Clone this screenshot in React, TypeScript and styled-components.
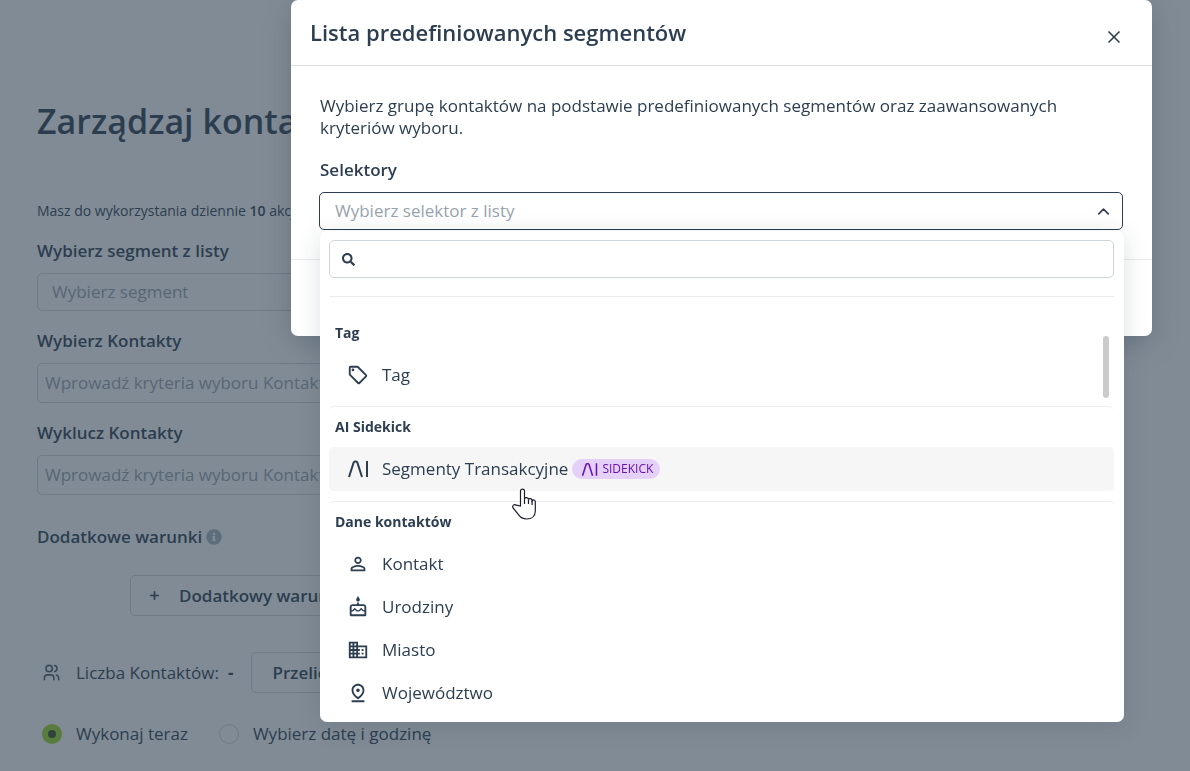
import React from 'react';
import styled, { createGlobalStyle, css } from 'styled-components';
import { MdOutlineSell, MdPersonOutline, MdOutlineCake, MdOutlinePinDrop, MdDomain } from 'react-icons/md';
import { FaSearch, FaInfoCircle } from 'react-icons/fa';
import { TbUsers } from 'react-icons/tb';
import { X, ChevronUp, Plus } from 'lucide-react';

const ink = '#2c3e50';
const muted = '#98a3ae';
const line = '#cfd6da';

const GlobalStyle = createGlobalStyle`
  * { box-sizing: border-box; }
  body {
    margin: 0;
    background: #fff;
    color: ${ink};
    font: 400 17px/22px 'Open Sans', sans-serif;
  }
  button, input { font: inherit; color: inherit; }
`;

const Page = styled.main`
  height: 100vh;
  overflow: hidden;
  padding: 98px 120px 0 37px;
`;
const PageTitle = styled.h1`
  margin: 0;
  font-size: 34px;
  line-height: 46px;
  font-weight: 600;
  white-space: nowrap;
`;
const Quota = styled.p`
  margin: 56px 0 0;
  font-size: 14px;
  b { font-weight: 600; }
`;
const Field = styled.div<{ $gap: number }>`
  display: flex;
  flex-direction: column;
  gap: 11px;
  margin-top: ${p => p.$gap}px;
`;
const label = css`
  font-size: 17px;
  line-height: 22px;
  font-weight: 600;
`;
const Label = styled.label`${label}`;
const TextInput = styled.input<{ $tall?: boolean }>`
  width: 100%;
  height: ${p => (p.$tall ? 40 : 38)}px;
  padding: 0 ${p => (p.$tall ? 7 : 14)}px 2px;
  border: 1px solid ${line};
  border-radius: 5px;
  background: transparent;
  outline: none;
  &::placeholder { color: ${muted}; opacity: 1; }
`;
const Heading = styled.h2`
  ${label}
  display: flex;
  align-items: center;
  gap: 4px;
  margin: 31px 0 0;
  svg { color: #a9b3bd; }
`;
const OutlineButton = styled.button`
  display: inline-flex;
  align-items: center;
  gap: 18px;
  height: 41px;
  padding: 0 20px;
  border: 1px solid ${line};
  border-radius: 5px;
  background: transparent;
  font-weight: 600;
`;
const ConditionRow = styled.div`
  padding: 27px 0 0 93px;
  button { padding: 0 17px; }
`;
const CountRow = styled.div`
  display: flex;
  align-items: center;
  gap: 15px;
  margin-top: 36px;
  padding-left: 5px;
  > svg { color: #4b5965; }
  strong { margin: 0 3px 0 -6px; }
`;
const RadioRow = styled.div`
  display: flex;
  gap: 31px;
  margin-top: 30px;
  padding-left: 5px;
`;
const RadioLabel = styled.label`
  display: flex;
  align-items: center;
  gap: 14px;
`;
const Radio = styled.input`
  appearance: none;
  width: 20px;
  height: 20px;
  margin: 0;
  border: 1px solid ${line};
  border-radius: 50%;
  &:checked {
    border: 6px solid #9ad626;
    background: #34501f;
  }
`;

const Overlay = styled.div`
  position: fixed;
  inset: 0;
  padding: 0 38px 0 291px;
  background: rgba(45, 62, 78, 0.6);
`;
const Dialog = styled.section`
  border-radius: 7px;
  background: #fff;
  box-shadow: 0 6px 28px rgba(44, 62, 80, 0.3);
`;
const DialogHeader = styled.header`
  display: flex;
  align-items: center;
  justify-content: space-between;
  height: 66px;
  padding: 0 28px 2px 19px;
  border-bottom: 1px solid #dcdfe2;
  h2 {
    margin: 0;
    font-size: 22px;
    line-height: 30px;
    font-weight: 600;
  }
`;
const CloseButton = styled.button`
  display: flex;
  margin-top: 10px;
  padding: 0;
  border: 0;
  background: none;
`;
const DialogBody = styled.div`
  padding: 29px 29px;
  p { margin: 0 0 20px; }
`;
const DialogFooter = styled.footer`
  height: 77px;
  border-top: 1px solid #e8eaec;
`;
const SelectWrap = styled.div`
  position: relative;
  margin: 11px 0 0 -1px;
`;
const SelectButton = styled.button`
  display: flex;
  align-items: center;
  justify-content: space-between;
  width: 100%;
  height: 38px;
  padding: 0 9px 0 15px;
  border: 1px solid ${ink};
  border-radius: 5px;
  background: #fff;
  span { color: ${muted}; }
`;
const Menu = styled.div`
  position: absolute;
  top: 39px;
  left: 1px;
  right: -1px;
  padding: 9px 10px 8px 9px;
  border-radius: 7px;
  background: #fff;
  box-shadow: 0 4px 24px rgba(30, 45, 60, 0.15);
`;
const SearchBox = styled.label`
  display: flex;
  align-items: center;
  height: 38px;
  padding: 0 12px;
  border: 1px solid ${line};
  border-radius: 5px;
  input {
    flex: 1;
    margin-left: 12px;
    border: 0;
    outline: none;
    background: none;
  }
`;
const Options = styled.div`
  position: relative;
  margin-top: 18px;
  padding-top: 16px;
  border-top: 1px solid #ebedee;
`;
const ScrollThumb = styled.div`
  position: absolute;
  top: 39px;
  right: 5px;
  width: 6px;
  height: 62px;
  border-radius: 3px;
  background: #cbcbcb;
`;
const Group = styled.div`
  & + & {
    margin-top: 10px;
    border-top: 1px solid #ebedee;
    border-radius: 5px;
  }
  h3 {
    margin: 0;
    padding: 9px 6px;
    font-size: 14px;
    line-height: 22px;
    font-weight: 700;
  }
`;
const Option = styled.button<{ $active?: boolean }>`
  display: flex;
  align-items: center;
  width: 100%;
  height: ${p => (p.$active ? 44 : 43)}px;
  padding: 0 18px;
  border: 0;
  border-radius: 5px;
  background: ${p => (p.$active ? '#f6f6f6' : 'transparent')};
  text-align: left;
  > svg { flex: none; margin-right: 13px; }
`;
const Badge = styled.span`
  display: flex;
  align-items: center;
  gap: 4px;
  height: 20px;
  margin-left: 4px;
  padding: 0 7px 0 9px;
  border-radius: 10px;
  background: #e5d0f8;
  color: #6a11b5;
  font-size: 12px;
  line-height: 20px;
`;
const Pointer = styled.svg`
  position: absolute;
  left: 190px;
  top: 256px;
`;

const AiMark = ({ width, height }: { width: number; height: number }) => (
  <svg width={width} height={height} viewBox="0 0 22 22" fill="none" stroke="currentColor" strokeWidth="2">
    <path d="M2 19 L6.6 4.6 Q7 3.5 8 3.5 H9 Q10 3.5 10.4 4.6 L15 19 M20 3 V19" />
  </svg>
);

const HandPointer = () => (
  <Pointer width="28" height="34" viewBox="0 0 28 34" aria-hidden="true">
    <path
      d="M10.5 19V4.2a2 2 0 0 1 4 0V12c.4-2 4-1.700 4 .6 .6-1.500 3.600-1.200 3.600 1 .7-1.200 3.200-.8 3.200 1.200V24c0 5-3.500 8-8.500 8-4.500 0-6.800-2-8.500-4.600L3 21c-1.400-2.300 1.200-4.500 3.300-2.800z"
      fill="#fff"
      stroke="#1b1b2b"
      strokeWidth="1.2"
    />
    <path d="M14.500 12v5M18.500 12.600V17M22.100 13.600V18" stroke="#1b1b2b" strokeWidth="1.2" />
  </Pointer>
);

export default function App() {
  return (
    <>
      <GlobalStyle />
      <Page>
        <PageTitle>Zarządzaj kontaktami</PageTitle>
        <Quota>Masz do wykorzystania dziennie <b>10</b> akcji</Quota>
        <Field $gap={18}>
          <Label htmlFor="segment">Wybierz segment z listy</Label>
          <TextInput id="segment" placeholder="Wybierz segment" />
        </Field>
        <Field $gap={19}>
          <Label htmlFor="include">Wybierz Kontakty</Label>
          <TextInput id="include" $tall placeholder="Wprowadź kryteria wyboru Kontaktów" />
        </Field>
        <Field $gap={19}>
          <Label htmlFor="exclude">Wyklucz Kontakty</Label>
          <TextInput id="exclude" $tall placeholder="Wprowadź kryteria wyboru Kontaktów" />
        </Field>
        <Heading>Dodatkowe warunki <FaInfoCircle size={16} /></Heading>
        <ConditionRow>
          <OutlineButton type="button"><Plus size={13} strokeWidth={3} />Dodatkowy warunek</OutlineButton>
        </ConditionRow>
        <CountRow>
          <TbUsers size={19} />
          <span>Liczba Kontaktów:</span>
          <strong>-</strong>
          <OutlineButton type="button">Przelicz</OutlineButton>
        </CountRow>
        <RadioRow>
          <RadioLabel><Radio type="radio" name="when" defaultChecked />Wykonaj teraz</RadioLabel>
          <RadioLabel><Radio type="radio" name="when" />Wybierz datę i godzinę</RadioLabel>
        </RadioRow>
      </Page>

      <Overlay>
        <Dialog role="dialog" aria-labelledby="dialog-title">
          <DialogHeader>
            <h2 id="dialog-title">Lista predefiniowanych segmentów</h2>
            <CloseButton type="button" aria-label="Zamknij"><X size={20} strokeWidth={2} /></CloseButton>
          </DialogHeader>
          <DialogBody>
            <p>Wybierz grupę kontaktów na podstawie predefiniowanych segmentów oraz zaawansowanych kryteriów wyboru.</p>
            <Label htmlFor="selector">Selektory</Label>
            <SelectWrap>
              <SelectButton id="selector" type="button" aria-expanded="true">
                <span>Wybierz selektor z listy</span>
                <ChevronUp size={19} strokeWidth={2} />
              </SelectButton>
              <Menu>
                <SearchBox>
                  <FaSearch size={13} />
                  <input type="text" aria-label="Szukaj" />
                </SearchBox>
                <Options>
                  <Group>
                    <h3>Tag</h3>
                    <Option type="button"><MdOutlineSell size={22} />Tag</Option>
                  </Group>
                  <Group>
                    <h3>AI Sidekick</h3>
                    <Option type="button" $active>
                      <AiMark width={22} height={22} />
                      Segmenty Transakcyjne
                      <Badge><AiMark width={17} height={17} />SIDEKICK</Badge>
                    </Option>
                  </Group>
                  <Group>
                    <h3>Dane kontaktów</h3>
                    <Option type="button"><MdPersonOutline size={22} />Kontakt</Option>
                    <Option type="button"><MdOutlineCake size={22} />Urodziny</Option>
                    <Option type="button"><MdDomain size={22} />Miasto</Option>
                    <Option type="button"><MdOutlinePinDrop size={22} />Województwo</Option>
                  </Group>
                  <ScrollThumb />
                </Options>
                <HandPointer />
              </Menu>
            </SelectWrap>
          </DialogBody>
          <DialogFooter />
        </Dialog>
      </Overlay>
    </>
  );
}
